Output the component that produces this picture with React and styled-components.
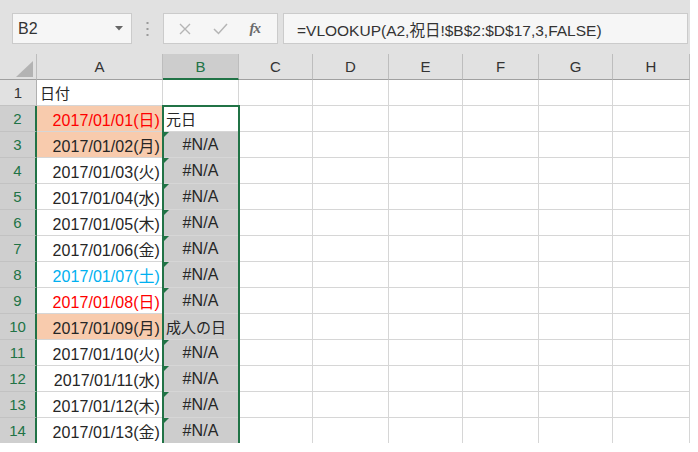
import React from "react";
import styled, { createGlobalStyle, css } from "styled-components";

const GREEN = "#217346";
const FONT = `"Liberation Sans", "Noto Sans CJK JP", sans-serif`;

const Global = createGlobalStyle`
  html, body { margin: 0; padding: 0; background: #ffffff; }
  body { font-family: ${FONT}; }
`;

const Frame = styled.div`
  width: 690px;
  height: 443px;
  overflow: hidden;
  background: #e1e1e1;
  font-family: ${FONT};
  color: #262626;
`;

const Toolbar = styled.div`
  height: 54px;
  box-sizing: border-box;
  padding: 13px 2px 0 12px;
  display: flex;
  align-items: flex-start;
`;

const Box = styled.div`
  height: 31px;
  box-sizing: border-box;
  background: #f6f6f6;
  border: 1px solid #cbcbcb;
  display: flex;
  align-items: center;
`;

const NameBox = styled(Box)`
  width: 120px;
  padding: 0 8px 0 5px;
  justify-content: space-between;
  font-size: 16px;
  color: #333;
`;

const Grip = styled.div`
  width: 31px;
  height: 31px;
  display: flex;
  align-items: center;
  justify-content: center;
`;

const CmdBox = styled(Box)`
  width: 115px;
  margin-right: 5px;
  justify-content: space-around;
  padding: 0 6px 0 4px;
`;

const Fx = styled.span`
  font-family: "Liberation Serif", serif;
  font-style: italic;
  font-weight: bold;
  font-size: 15px;
  color: #6a6a6a;
  letter-spacing: -1px;
`;

const FormulaBox = styled(Box)`
  flex: 1;
  padding-left: 13px;
  font-size: 15.5px;
  color: #333;
  white-space: nowrap;
`;

const Sheet = styled.div`
  position: relative;
  display: grid;
  grid-template-columns: 37px 126px 76px 74px 76px 74px 76px 74px 77px;
  grid-auto-rows: 26px;
`;

const centered = css`
  display: flex;
  align-items: center;
  justify-content: center;
  box-sizing: border-box;
  font-size: 15px;
`;

const Corner = styled.div`
  ${centered};
  position: relative;
  background: #e1e1e1;
  border-right: 1px solid #bdbdbd;
  border-bottom: 1px solid #a0a0a0;
  justify-content: flex-end;
  align-items: flex-end;
  padding: 0 3px 2px 0;
`;

const ColHeader = styled.div`
  ${centered};
  background: ${(p) => (p.$sel ? "#cdcdcd" : "#e1e1e1")};
  color: ${(p) => (p.$sel ? GREEN : "#333")};
  border-right: 1px solid #bdbdbd;
  border-bottom: ${(p) => (p.$sel ? `2px solid ${GREEN}` : "1px solid #a0a0a0")};
`;

const RowHeader = styled.div`
  ${centered};
  background: ${(p) => (p.$sel ? "#cfcfcf" : "#e1e1e1")};
  color: ${(p) => (p.$sel ? GREEN : "#333")};
  border-right: ${(p) => (p.$sel ? `2px solid ${GREEN}` : "1px solid #b0b0b0")};
  border-bottom: 1px solid #c2c2c2;
`;

const Cell = styled.div`
  position: relative;
  box-sizing: border-box;
  display: flex;
  align-items: center;
  font-size: 15px;
  white-space: nowrap;
  overflow: visible;
  background: ${(p) => p.$bg || "#ffffff"};
  color: ${(p) => p.$color || "#262626"};
  border-right: 1px solid #d6d6d6;
  border-bottom: 1px solid #d6d6d6;
  justify-content: ${(p) =>
    p.$align === "right" ? "flex-end" : p.$align === "center" ? "center" : "flex-start"};
  padding: ${(p) => (p.$align === "right" ? "0 2px 0 0" : p.$align === "center" ? "0" : "0 0 0 3px")};
`;

const DateText = styled.span`
  font-size: 16px;
  letter-spacing: 0.05px;
`;

const ErrText = styled.span`
  font-size: 16px;
  letter-spacing: 0.1px;
`;

const ErrorMark = styled.span`
  position: absolute;
  left: 1px;
  top: 0;
  width: 0;
  height: 0;
  border-top: 5px solid ${GREEN};
  border-right: 5px solid transparent;
`;

const Selection = styled.div`
  position: absolute;
  left: 162px;
  top: 51px;
  width: 78px;
  height: 400px;
  box-sizing: border-box;
  border: 2px solid ${GREEN};
  pointer-events: none;
`;

const ORANGE = "#f8cbad";
const RED = "#ff0000";
const BLUE = "#00b0f0";

const rows = [
  { d: "2017/01/01(日)", color: RED, bg: ORANGE, b: "元日", active: true },
  { d: "2017/01/02(月)", bg: ORANGE },
  { d: "2017/01/03(火)" },
  { d: "2017/01/04(水)" },
  { d: "2017/01/05(木)" },
  { d: "2017/01/06(金)" },
  { d: "2017/01/07(土)", color: BLUE },
  { d: "2017/01/08(日)", color: RED },
  { d: "2017/01/09(月)", bg: ORANGE, b: "成人の日" },
  { d: "2017/01/10(火)" },
  { d: "2017/01/11(水)" },
  { d: "2017/01/12(木)" },
  { d: "2017/01/13(金)" },
];

const letters = ["A", "B", "C", "D", "E", "F", "G", "H"];
const SEL_FILL = "#cdcdcd";

function EmptyCells() {
  return ["C", "D", "E", "F", "G", "H"].map((c) => <Cell key={c} />);
}

export default function App() {
  return (
    <>
      <Global />
      <Frame>
        <Toolbar>
          <NameBox>
            <span>B2</span>
            <svg width="8" height="5" viewBox="0 0 8 5">
              <path d="M0 0 L8 0 L4 4.5 Z" fill="#666" />
            </svg>
          </NameBox>
          <Grip>
            <svg width="3" height="16" viewBox="0 0 3 16">
              <rect x="0.5" y="1" width="2" height="2" fill="#9a9a9a" />
              <rect x="0.5" y="7" width="2" height="2" fill="#9a9a9a" />
              <rect x="0.5" y="13" width="2" height="2" fill="#9a9a9a" />
            </svg>
          </Grip>
          <CmdBox>
            <svg width="12" height="12" viewBox="0 0 12 12">
              <path d="M1 1 L11 11 M11 1 L1 11" stroke="#b5b5b5" strokeWidth="1.4" fill="none" />
            </svg>
            <svg width="15" height="12" viewBox="0 0 15 12">
              <path d="M1 6 L5.5 10.5 L14 1" stroke="#b5b5b5" strokeWidth="1.5" fill="none" />
            </svg>
            <Fx>fx</Fx>
          </CmdBox>
          <FormulaBox>=VLOOKUP(A2,祝日!$B$2:$D$17,3,FALSE)</FormulaBox>
        </Toolbar>
        <Sheet>
          <Corner>
            <svg width="17" height="16" viewBox="0 0 17 16">
              <path d="M17 0 L17 16 L0 16 Z" fill="#b3b3b3" />
            </svg>
          </Corner>
          {letters.map((l) => (
            <ColHeader key={l} $sel={l === "B"}>
              {l}
            </ColHeader>
          ))}

          <RowHeader>1</RowHeader>
          <Cell>日付</Cell>
          <Cell />
          <EmptyCells />

          {rows.map((r, i) => {
            const n = i + 2;
            return (
              <React.Fragment key={n}>
                <RowHeader $sel>{n}</RowHeader>
                <Cell $align="right" $bg={r.bg} $color={r.color}>
                  <DateText>{r.d}</DateText>
                </Cell>
                {r.b ? (
                  <Cell $bg={r.active ? "#ffffff" : SEL_FILL}>{r.b}</Cell>
                ) : (
                  <Cell $align="center" $bg={SEL_FILL}>
                    <ErrorMark />
                    <ErrText>#N/A</ErrText>
                  </Cell>
                )}
                <EmptyCells />
              </React.Fragment>
            );
          })}
          <Selection />
        </Sheet>
      </Frame>
    </>
  );
}
